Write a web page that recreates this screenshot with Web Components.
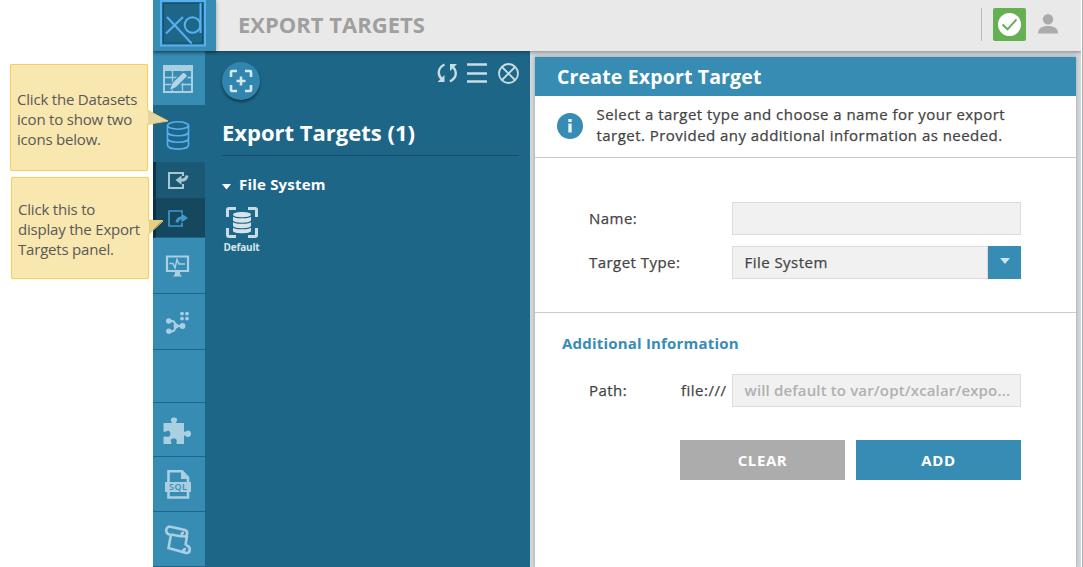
<!DOCTYPE html>
<html lang="en"><head><meta charset="utf-8"><title>Export Targets</title>
<style>
html,body{margin:0;height:567px;overflow:hidden;background:#fff}
body{font-family:"Open Sans",sans-serif;position:relative}
</style></head><body>
<xd-app></xd-app>
<script>
const define=(name,html)=>customElements.define(name,class extends HTMLElement{
  constructor(){super();this.attachShadow({mode:'open'}).innerHTML=html;}
});

define('xd-callout',`<style>
:host{display:flex;align-items:center;box-sizing:border-box;position:absolute;background:#f8e7af;border:1.5px solid #f3cf66;border-radius:2px;box-shadow:0 0 1px #f3cf66;color:#595959;font-size:15px;line-height:20px;letter-spacing:-.2px;padding:3px 0 0 6px;white-space:pre;z-index:5}
</style><div><slot></slot></div><slot name="tip"></slot>`);

define('xd-logo',`<style>:host{display:flex;width:63px;height:51px;background:#378cb4;box-shadow:0 1px 4px rgba(0,0,0,.35);z-index:3;justify-content:center}</style>
<svg width="63" height="51" viewBox="0 0 63 51" fill="none">
<path d="M8 1V45.500H52V1Z" fill="#1e6687" stroke="#57b0f0" stroke-width="2"/><path d="M10.500 3.500H49.500V43H10.500Z" stroke="#174f6d"/>
<g stroke="#57b0f0" stroke-width="2"><path d="M14 17L38.700 43.500M30 17L13 33.500"/><circle cx="39.500" cy="25" r="7.800"/><path d="M47.500 3V33"/></g></svg>`);

define('xd-header',`<style>
:host{display:flex;height:51px;width:928px;background:#e9e9e9;box-shadow:0 1px 4px rgba(0,0,0,.4);clip-path:inset(0 0 -6px 0);position:relative;z-index:2}
h1{margin:0 auto 0 22px;font-size:22px;line-height:48px;font-weight:700;color:#9f9f9f;white-space:nowrap;letter-spacing:0}
.r{display:flex;align-items:center;height:48px}
i{width:1px;height:33px;background:#bdbdbd;margin-right:11px}
svg{display:block}
</style><xd-logo></xd-logo><h1>EXPORT TARGETS</h1>
<div class="r"><i></i><svg width="33" height="33" viewBox="0 0 33 33"><rect width="33" height="33" rx="2" fill="#64b053"/><circle cx="16.500" cy="16.500" r="11.500" fill="#fff"/><path d="M9.500 16.500L14.500 21.300L23.500 11.300" fill="none" stroke="#64b053" stroke-width="2"/></svg>
<svg style="margin:0 23px 0 12px" width="20" height="20" viewBox="0 0 20 20" fill="#ababab"><circle cx="10" cy="5.300" r="5.200"/><path d="M0 19.500C0 14 4 12 10 12S20 14 20 19.500Z"/></svg></div>`);

define('xd-nav',`<style>
:host{display:flex;flex-direction:column;width:52px;height:516px;background:#1e6687}
div{display:flex;align-items:center;justify-content:center;box-sizing:border-box;flex:none;background:#378cb4;border-bottom:1px solid #1e6687}
div.ds{background:#1e6687;border:0}
.s{border:0;border-left:3px solid #0b3449;background:#1b5873;border-bottom:1px solid #164a64}
.s.on{background:#15485f;border-left-color:#0b3044;border-bottom:1px solid #1e6687}
svg{display:block;overflow:visible}
</style>
<div style="height:55px;padding:2px 2px 0 0"><svg width="30" height="28" viewBox="0 0 30 28"><path d="M1 1H29V27H1Z" fill="none" stroke="#aacfe1" stroke-width="2"/><path d="M0 0H30V6H0Z" fill="#aacfe1"/><path d="M2 12.500H28M2 19.500H28M9.500 6V27M19.500 6V27" stroke="#aacfe1" stroke-width="1.300"/><path d="M6 26L9 17L20 6L26 11L15 23Z" fill="#378cb4"/><path d="M7 25L9.500 18L20 8Q22 7.500 24 11L13 22Z" fill="#b6d5e4"/></svg></div>
<div class="ds" style="height:56px;padding:2px 3px 0 0"><svg width="22" height="29" viewBox="0 0 22 29" fill="none" stroke="#57b0f0" stroke-width="1.600"><ellipse cx="11" cy="4.500" rx="10.500" ry="3.700"/><path d="M.5 4.500V24C.5 29.500 21.500 29.500 21.500 24V4.500M.5 11C.5 16 21.500 16 21.500 11M.5 17.500C.5 22.500 21.500 22.500 21.500 17.500"/></svg></div>
<div class="s" style="height:37px;padding-right:6px"><svg width="20" height="17" viewBox="0 0 20 17" fill="none" stroke="#a9c6d3" stroke-width="2"><path d="M15 4V1H1V16H15V12"/><path d="M19 3.500Q18.500 8.300 13 8.300" stroke-width="3"/><path d="M7.500 8L13.500 3.500V12.800Z" fill="#a9c6d3" stroke="none"/></svg></div>
<div class="s on" style="height:39px;padding-right:6px"><svg width="20" height="17" viewBox="0 0 20 17" fill="none" stroke="#4298c9" stroke-width="1.700"><path d="M14 3.500V1H1V16H14V13"/><path d="M9 12.500Q9.500 8 14 8" stroke-width="3"/><path d="M20 8L13.500 3.500V12.500Z" fill="#4298c9" stroke="none"/></svg></div>
<div style="height:56px;padding-right:4px"><svg width="23" height="22" viewBox="0 0 23 22" fill="none" stroke="#aacfe1" stroke-width="2.200"><path d="M1 1.500H22V16H1Z"/><path d="M3.500 8.500H7L9 13L11 4.500L13 9H19" stroke-width="1.500"/><path d="M7 21.500H16L14 19V16H9V19Z" fill="#aacfe1" stroke="none"/></svg></div>
<div style="height:56px;padding:2px 4px 0 0"><svg width="23" height="22" viewBox="0 0 23 22" fill="#aacfe1"><circle cx="2.800" cy="9" r="2.800"/><circle cx="2.800" cy="19.300" r="2.700"/><circle cx="10" cy="14" r="2.500"/><circle cx="16.500" cy="14" r="2.900"/><path d="M3 9H6Q9 9 9.500 14Q9 19.300 6 19.300H3M10 14H16" fill="none" stroke="#aacfe1" stroke-width="2.200"/><circle cx="16" cy="1.600" r="1.900"/><circle cx="21" cy="1.600" r="1.900"/><circle cx="16" cy="6.600" r="1.900"/><circle cx="21" cy="6.600" r="1.900"/></svg></div>
<div style="height:53px"></div>
<div style="height:54px;padding:1px 4px 0 0"><svg width="28" height="27" viewBox="0 0 28 27" fill="#aacfe1"><path d="M.5 6H8.500C9.500 5 7 4 8 2C9 0 13 0 14 2C15 4 12 5 13.500 6H21V14.500C23 15.500 23.500 13 25.500 13.500C29 14 29 19.500 25.500 20C23 20.500 23 17.800 21 18.500V27H14C12.500 25.500 14.500 24 13.500 22.500C12.500 21 9 21 8 22.500C7 24.500 9.500 25.500 8 27H.5V20C2.500 18.500 5 21 6.500 19C8 17.500 7.500 15 6 14C4 13 2.500 16 .5 14.500Z"/></svg></div>
<div style="height:55px;padding:1px 3px 0 0"><svg width="26" height="29" viewBox="0 0 26 29"><path d="M3.500 1.300H17L23 7.500V27.500H3.500Z" fill="none" stroke="#aacfe1" stroke-width="2.600"/><path d="M16 1V9H24Z" fill="#aacfe1"/><path d="M0 12H26V22H0Z" fill="#aacfe1"/><text x="13" y="20.300" font-family="Open Sans" font-weight="600" font-size="9" text-anchor="middle" textLength="18" fill="#378cb4">SQL</text></svg></div>
<div style="height:55px;padding-right:3px"><svg width="26" height="29" viewBox="0 0 26 29" fill="none" stroke="#aacfe1" stroke-width="2.600"><path d="M6 9.500L17 11.500M5.500 9.500C.5 9.500 -.5 3 4.500 1.500L20 5C23.500 6.500 22.500 11.500 19 11.500C16 11 16 8 19 7.500M6 9.500L3.500 23L19.500 27.500M22 10.500L20.500 20.500"/><path d="M21 20.500C26 21 26 28 21 28C17.500 27.500 17.500 24 21 24"/></svg></div>`);

define('xd-panel',`<style>
:host{display:block;width:325px;height:516px;background:#1e6687;box-sizing:border-box;padding:10px 11px 0 17px;color:#fff}
.t{display:flex;align-items:flex-start;height:59px}
.plus{width:38px;height:38px;border-radius:50%;background:#3086ae;box-shadow:0 2px 3px rgba(0,0,0,.45);display:flex;align-items:center;justify-content:center;margin:1px auto 0 0}
.t>svg{display:block}
h2{margin:0;font-size:22px;line-height:25px;font-weight:700;height:35px;border-bottom:1px solid #154e69;white-space:nowrap;letter-spacing:0}
.g{display:flex;align-items:center;font-weight:700;font-size:15px;line-height:20px;margin-top:18px;gap:8px;letter-spacing:.2px}
.d{width:39px;margin-top:13px;text-align:center;font-size:10px;line-height:14px;font-weight:700;color:#d7e5eb;letter-spacing:-.2px}
.d svg{display:block;margin:0 auto 2px}
.g svg{margin-top:5px}
</style>
<div class="t"><div class="plus"><svg width="24" height="24" viewBox="0 0 24 24" fill="none" stroke="#d5e6ee" stroke-width="2.600"><path d="M2 8V3Q2 2 3 2H8M16 2H21Q22 2 22 3V8M22 16V21Q22 22 21 22H16M8 22H3Q2 22 2 21V16M12 7.500V16.500M7.500 12H16.500"/></svg></div>
<svg style="margin:2px 9px 0 0" width="21" height="20" viewBox="0 0 21 20" fill="none" stroke="#c8dce4" stroke-width="2.400"><path d="M7.500 1.500C0 5.500 .5 12 5 16.500M13 18.500C20.500 14.500 20 8 15.500 3.500"/><path d="M.5 19H7.500V12Z M20 1H13V8Z" fill="#c8dce4" stroke="none"/></svg>
<svg style="margin:2px 11px 0 0" width="20" height="20" viewBox="0 0 20 20"><path d="M0 1.500H20M0 10.500H20M0 18.500H20" stroke="#c8dce4" stroke-width="2.300"/></svg>
<svg style="margin:2px -1px 0 0" width="22" height="21" viewBox="0 0 22 21" fill="none" stroke="#c8dce4" stroke-width="1.800"><circle cx="10.500" cy="10.500" r="9.500"/><path d="M4 4L17 17M17 4L4 17"/></svg></div>
<h2>Export Targets (1)</h2>
<div class="g"><svg width="9" height="6"><path d="M0 0H9L4.500 5.500Z" fill="#fff"/></svg><span>File System</span></div>
<div class="d"><svg width="32" height="31" viewBox="0 0 32 31"><path d="M1.500 10V3Q1.500 1.500 3 1.500H10M22 1.500H29Q30.500 1.500 30.500 3V10M30.500 21V28Q30.500 29.500 29 29.500H22M10 29.500H3Q1.500 29.500 1.500 28V21" fill="none" stroke="#c8dce5" stroke-width="3"/><path d="M7 7.500C7 4 25 4 25 7.500V24C25 27 7 27 7 24Z" fill="#d5e3ea"/><path d="M7 8.500C8 11.500 24 11.500 25 8.500M7 14C8 17 24 17 25 14M7 19.500C8 22.500 24 22.500 25 19.500" fill="none" stroke="#1e6687" stroke-width="1.100"/></svg>Default</div>`);

define('xd-field',`<style>
:host{display:flex;align-items:center;height:33px;color:#444;font-size:15px;font-weight:500;letter-spacing:.46px;-webkit-text-stroke:.25px}
label{width:var(--lw,143px);white-space:nowrap;line-height:20px;padding-bottom:2px}
.box{flex:1;min-width:0;box-sizing:border-box;height:33px;border:1px solid #dcdcdc;background:#f1f1f1;line-height:31px;padding-left:11.500px;white-space:nowrap;overflow:hidden}
</style><label><slot name="label"></slot></label><slot name="prefix"></slot><div class="box"><slot></slot></div><slot name="end"></slot>`);

define('xd-button',`<style>:host{display:flex;align-items:center;justify-content:center;width:165px;height:40px;background:var(--bg,#378cb4);color:#fff;font-weight:700;font-size:15px;letter-spacing:.6px}</style><span><slot></slot></span>`);

define('xd-form',`<style>
:host{display:block;width:541px;height:510px;margin:6px 0 0 5px;background:#fff;box-shadow:0 0 4px rgba(70,90,100,.45);color:#444}
header{height:39px;background:#378cb4;color:#fff;font-weight:700;font-size:19.5px;line-height:39px;padding-left:22px;white-space:nowrap;letter-spacing:.15px}
.info{display:flex;height:61px;border-bottom:1px solid #ccc;font-size:15px;line-height:21px;font-weight:500;letter-spacing:.46px;white-space:nowrap;-webkit-text-stroke:.25px}
.info svg{margin:17px 13.500px 0 22px;flex:none}
.info p{margin:8px 0 0}
.a{box-sizing:border-box;height:155px;border-bottom:1px solid #ccc;padding:44px 55px 0 54px;display:flex;flex-direction:column;gap:11px}
.b{padding:20px 55px 0 54px}
h3{margin:0 0 20px -27px;font-size:15px;line-height:21px;font-weight:700;color:#378cb4;letter-spacing:.2px}
.dd{width:33px;height:33px;background:#378cb4;display:flex;align-items:center;justify-content:center;padding-bottom:3px;box-sizing:border-box}
.btn{display:flex;gap:11px;justify-content:flex-end;margin-top:33px}
.ph{color:#b0b0b0;font-weight:600;letter-spacing:.15px;-webkit-text-stroke:0}
.pre{width:51px;letter-spacing:.5px;line-height:20px;padding-bottom:2px}
</style><header>Create Export Target</header>
<div class="info"><svg width="26" height="42" viewBox="0 0 26 42"><circle cx="13" cy="13" r="13" fill="#378cb4"/><path d="M11.300 10.500H14.700V19.500H11.300ZM11.300 6H14.700V9H11.300Z" fill="#e5f1f6"/></svg><p>Select a target type and choose a name for your export<br>target. Provided any additional information as needed.</p></div>
<div class="a"><xd-field><span slot="label">Name:</span></xd-field>
<xd-field><span slot="label">Target Type:</span>File System<div class="dd" slot="end"><svg width="10" height="6"><path d="M0 0H10L5 6Z" fill="#cfe3ed"/></svg></div></xd-field></div>
<div class="b"><h3>Additional Information</h3>
<xd-field style="--lw:92px"><span slot="label">Path:</span><span slot="prefix" class="pre">file:///</span><span class="ph">will default to var/opt/xcalar/expo...</span></xd-field>
<div class="btn"><xd-button style="--bg:#acacac">CLEAR</xd-button><xd-button>ADD</xd-button></div></div>`);

define('xd-app',`<style>
:host{display:block}
.app{margin-left:153px;width:928px;height:567px;background:#d3d9dc;border-right:1px solid #b0b0b0;padding-right:1px;background-clip:content-box}
.row{display:flex;height:516px}
</style>
<xd-callout style="left:10px;top:64px;width:138px;height:107px">Click the Datasets
icon to show two
icons below.<svg slot="tip" style="position:absolute;right:-22px;top:44px" width="23" height="16" viewBox="0 0 23 16"><path d="M0 0L22 12L0 15.500Z" fill="#e5d7a5"/><path d="M0 0H2V16H0Z" fill="#f8e7af"/><path d="M1 1L22 12L1 15.500" fill="none" stroke="#f0cc60"/></svg></xd-callout>
<xd-callout style="left:11px;top:177px;width:138px;height:102px;padding-top:1px">Click this to
display the Export
Targets panel.<svg slot="tip" style="position:absolute;right:-16px;top:41px" width="17" height="18" viewBox="0 0 17 18"><path d="M0 1H16L0 17Z" fill="#e5cf86"/><path d="M0 1H2V16H0Z" fill="#f8e7af"/><path d="M1 1L16 2L1 16" fill="none" stroke="#f0cc60"/></svg></xd-callout>
<div class="app"><xd-header></xd-header><div class="row"><xd-nav></xd-nav><xd-panel></xd-panel><xd-form></xd-form></div></div>`);
</script></body></html>
